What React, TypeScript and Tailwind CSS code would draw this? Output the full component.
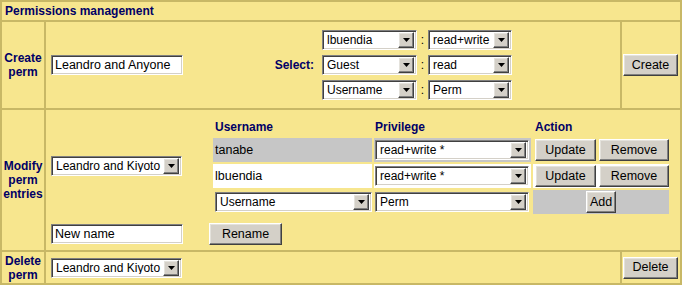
const sunk =
  'bg-white border border-t-[#808080] border-l-[#808080] border-b-white border-r-white shadow-[inset_1px_1px_0_#404040,inset_-1px_-1px_0_#d4d0c8]'
const raised =
  'bg-[#d4d0c8] border border-t-white border-l-white border-r-[#404040] border-b-[#404040] shadow-[inset_-1px_-1px_0_#808080,inset_1px_1px_0_#e4e2dc]'

function Arrow() {
  return (
    <div className={`w-[16px] h-[16px] shrink-0 flex items-center justify-center ${raised}`}>
      <svg width="7" height="4" viewBox="0 0 7 4">
        <path d="M0 0h7L3.5 4z" fill="#000" />
      </svg>
    </div>
  )
}

function Select({ value, w }: { value: string; w: string }) {
  return (
    <div className={`${w} h-[20px] shrink-0 flex items-center pl-[4px] pr-[2px] ${sunk}`}>
      <span className="flex-1 whitespace-nowrap overflow-hidden text-[12px] leading-none text-black">{value}</span>
      <Arrow />
    </div>
  )
}

function Input({ value }: { value: string }) {
  return (
    <div className={`w-[132px] h-[20px] shrink-0 flex items-center pl-[3px] text-[12.5px] leading-none text-black ${sunk}`}>
      {value}
    </div>
  )
}

function Btn({ label, w }: { label: string; w: string }) {
  return (
    <div className={`${w} h-[22px] shrink-0 flex items-center justify-center text-[12.5px] leading-none text-black ${raised}`}>
      {label}
    </div>
  )
}

function Label({ children }: { children: React.ReactNode }) {
  return (
    <div className="bg-[#f7e68e] flex items-center justify-center text-center text-[12px] leading-[14px] font-bold text-[#000066]">
      <span>{children}</span>
    </div>
  )
}

export default function App() {
  return (
    <div className="w-[682px] h-[285px] bg-[#c8b866] p-[2px] grid grid-cols-[42px_574px_58px] grid-rows-[18px_86px_140px_31px] gap-[2px] font-['Liberation_Sans',Arial,sans-serif]">
      <div className="col-span-3 bg-[#f7e68e] flex items-center pl-[3px] text-[12px] font-bold text-[#000066]">
        Permissions management
      </div>

      {/* create */}
      <Label>
        Create
        <br />
        perm
      </Label>
      <div className="bg-[#f7e68e] flex items-center pl-[5px]">
        <Input value="Leandro and Anyone" />
        <div className="w-[139px] shrink-0 pr-[8px] text-right text-[12px] font-bold text-[#000066]">Select:</div>
        <div className="flex flex-col gap-[5px]">
          <Select value="lbuendia" w="w-[95px]" />
          <Select value="Guest" w="w-[95px]" />
          <Select value="Username" w="w-[95px]" />
        </div>
        <div className="w-[11px] shrink-0 flex flex-col gap-[5px] text-[12px] text-black">
          <div className="h-[20px] flex items-center justify-center">:</div>
          <div className="h-[20px] flex items-center justify-center">:</div>
          <div className="h-[20px] flex items-center justify-center">:</div>
        </div>
        <div className="flex flex-col gap-[5px]">
          <Select value="read+write" w="w-[84px]" />
          <Select value="read" w="w-[84px]" />
          <Select value="Perm" w="w-[84px]" />
        </div>
      </div>
      <div className="bg-[#f7e68e] flex items-center pl-[1px]">
        <Btn label="Create" w="w-[55px]" />
      </div>

      {/* modify */}
      <Label>
        Modify
        <br />
        perm
        <br />
        entries
      </Label>
      <div className="col-span-2 bg-[#f7e68e] flex flex-col">
        <div className="mt-[8px] flex items-center">
          <div className="w-[167px] shrink-0 pl-[5px]">
            <Select value="Leandro and Kiyoto" w="w-[131px]" />
          </div>
          <div className="shrink-0 grid grid-cols-[159px_157px_136px] grid-rows-[18px_24px_24px_24px] gap-[2px] text-[12.5px]">
            <div className="pl-[2px] flex items-center text-[12px] font-bold text-[#000066]">Username</div>
            <div className="pl-[1px] flex items-center text-[12px] font-bold text-[#000066]">Privilege</div>
            <div className="pl-[2px] flex items-center text-[12px] font-bold text-[#000066]">Action</div>

            <div className="bg-[#c6c6c6] pl-[2px] flex items-center text-black">tanabe</div>
            <div className="bg-[#c6c6c6] pl-[1px] flex items-center">
              <Select value="read+write *" w="w-[154px]" />
            </div>
            <div className="flex items-center gap-[3px] pl-[2px]">
              <Btn label="Update" w="w-[61px]" />
              <Btn label="Remove" w="w-[70px]" />
            </div>

            <div className="bg-white pl-[2px] flex items-center text-black">lbuendia</div>
            <div className="bg-white pl-[1px] flex items-center">
              <Select value="read+write *" w="w-[154px]" />
            </div>
            <div className="bg-white flex items-center gap-[3px] pl-[2px]">
              <Btn label="Update" w="w-[61px]" />
              <Btn label="Remove" w="w-[70px]" />
            </div>

            <div className="pl-[2px] flex items-center">
              <Select value="Username" w="w-[157px]" />
            </div>
            <div className="pl-[1px] flex items-center">
              <Select value="Perm" w="w-[154px]" />
            </div>
            <div className="bg-[#c6c6c6] flex items-center justify-center">
              <Btn label="Add" w="w-[30px]" />
            </div>
          </div>
        </div>
        <div className="mt-[9px] flex items-center pl-[5px]">
          <Input value="New name" />
          <div className="ml-[26px]">
            <Btn label="Rename" w="w-[73px]" />
          </div>
        </div>
      </div>

      {/* delete */}
      <Label>
        Delete
        <br />
        perm
      </Label>
      <div className="bg-[#f7e68e] flex items-center pl-[5px]">
        <Select value="Leandro and Kiyoto" w="w-[131px]" />
      </div>
      <div className="bg-[#f7e68e] flex items-center pl-[1px]">
        <Btn label="Delete" w="w-[55px]" />
      </div>
    </div>
  )
}
